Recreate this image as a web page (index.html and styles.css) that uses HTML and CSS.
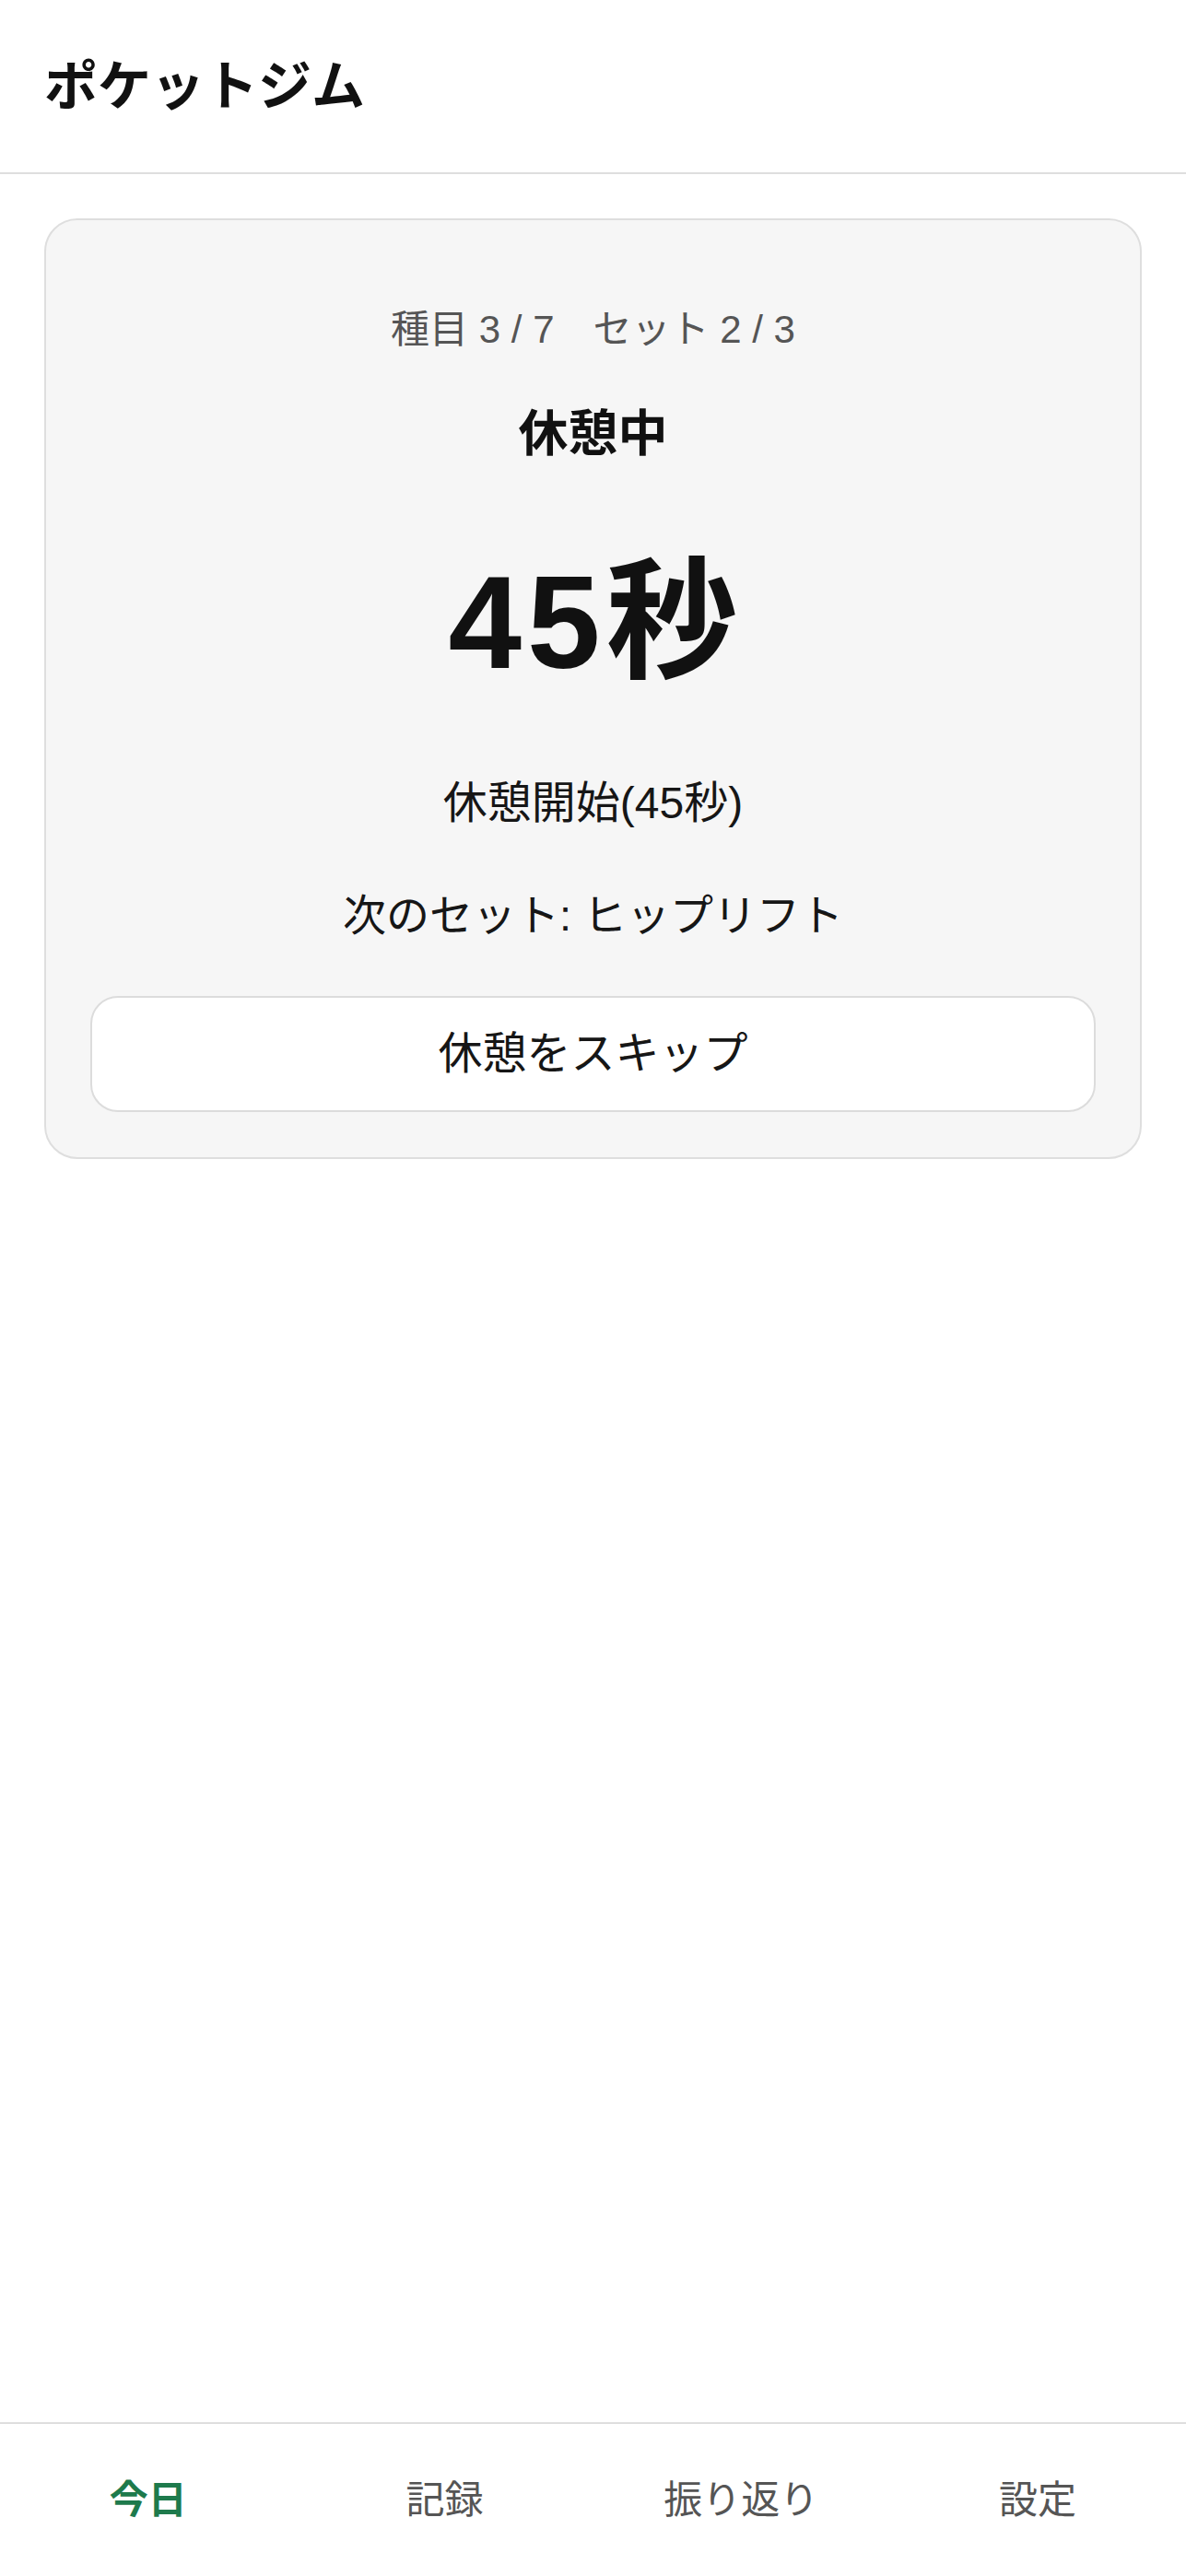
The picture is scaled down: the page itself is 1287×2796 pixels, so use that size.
FILE: index.html
```html
<!DOCTYPE html>
<html lang="ja">
<head>
<meta charset="utf-8">
<title>ポケットジム</title>
<link rel="stylesheet" href="styles.css">
</head>
<body>
<div class="app">
  <header class="app-header">
    <h1 class="app-title">ポケットジム</h1>
  </header>
  <main class="main">
    <section class="card">
      <p class="stat">種目 3 / 7　セット 2 / 3</p>
      <p class="status">休憩中</p>
      <p class="timer">45秒</p>
      <p class="started">休憩開始(45秒)</p>
      <p class="next">次のセット: ヒップリフト</p>
      <button class="skip" type="button">休憩をスキップ</button>
    </section>
  </main>
  <nav class="tabbar">
    <a class="tab tab-active">今日</a>
    <a class="tab">記録</a>
    <a class="tab">振り返り</a>
    <a class="tab">設定</a>
  </nav>
</div>
</body>
</html>
```
FILE: styles.css
```css
html, body {
  margin: 0;
  padding: 0;
  background: #ffffff;
}
body {
  font-family: "Liberation Sans", "Noto Sans CJK JP", sans-serif;
  color: #141414;
}
.app {
  display: flex;
  flex-direction: column;
  height: 100vh;
}
.app-header {
  height: 187px;
  padding: 0 48px;
  display: flex;
  align-items: center;
  border-bottom: 2px solid #dedede;
  flex-shrink: 0;
}
.app-title {
  margin: 0;
  font-size: 58px;
  font-weight: 700;
  line-height: 1.5;
  color: #111;
}
.main {
  flex: 1;
  padding: 48px;
}
.card {
  background: #f6f6f6;
  border: 2px solid #dedede;
  border-radius: 36px;
  padding: 87px 48px 49px;
  display: flex;
  flex-direction: column;
  align-items: stretch;
  text-align: center;
}
.card p {
  margin: 0;
}
.stat {
  font-size: 42px;
  line-height: 63px;
  color: #555;
}
.status {
  margin-top: 42px !important;
  font-size: 54px;
  line-height: 81px;
  font-weight: 700;
  color: #111;
}
.timer {
  margin-top: 80px !important;
  font-size: 143px;
  line-height: 168px;
  font-weight: 700;
  letter-spacing: 6px;
  padding-left: 6px;
  color: #111;
}
.started {
  margin-top: 76px !important;
  font-size: 48px;
  line-height: 72px;
  color: #161616;
}
.next {
  margin-top: 50px !important;
  font-size: 47px;
  line-height: 72px;
  color: #161616;
}
.skip {
  margin-top: 51px;
  background: #ffffff;
  border: 2px solid #dcdcdc;
  border-radius: 30px;
  padding: 25px 0;
  font-family: inherit;
  font-size: 48px;
  line-height: 72px;
  color: #161616;
}
.tabbar {
  flex-shrink: 0;
  height: 165px;
  border-top: 2px solid #dedede;
  display: flex;
  align-items: center;
}
.tab {
  flex: 1;
  text-align: center;
  font-size: 42px;
  line-height: 63px;
  color: #555;
}
.tab-active {
  color: #1e7a4c;
  font-weight: 700;
}
```
